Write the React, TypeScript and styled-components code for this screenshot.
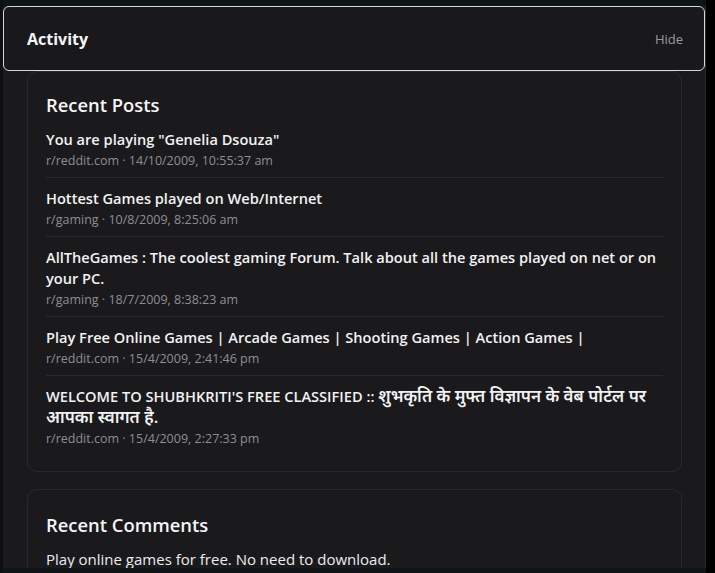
import React from "react";
import styled, { createGlobalStyle } from "styled-components";

const Global = createGlobalStyle`
  html, body { margin: 0; padding: 0; background: #0f1417; }
  body { font-family: "Open Sans", "Noto Sans", "Noto Sans Devanagari", "DejaVu Sans", sans-serif; color: #f2f2f2; }
  * { box-sizing: border-box; }
`;

const Page = styled.div`
  display: flex;
  height: 573px;
  overflow: hidden;
  background: #0f1417;
`;

const Gutter = styled.div`
  width: 3px;
  flex: none;
  background: #0d0f11;
`;

const Panel = styled.div`
  width: 703px;
  flex: none;
  margin-top: 6px;
  display: flex;
  flex-direction: column;
  background: #1a1a1c;
  border-right: 1px solid #2c2c2e;
  height: 562px;
  overflow: hidden;
`;

const Track = styled.div`
  flex: 1;
  background: #000;
`;

const Header = styled.div`
  height: 65px;
  flex: none;
  display: flex;
  align-items: center;
  justify-content: space-between;
  padding: 0 22px 0 23px;
  border: 1px solid #d6d6d6;
  border-radius: 6px;
  background: #19191b;
`;

const HeaderTitle = styled.h2`
  margin: 0;
  font-size: 16px;
  font-weight: 700;
  color: #f5f5f5;
`;

const HideButton = styled.span`
  font-size: 13px;
  color: #9b9b9f;
  margin-right: -1px;
`;

const Body = styled.div`
  display: flex;
  flex-direction: column;
  gap: 17px;
  padding: 0 23px 0 24px;
`;

const Card = styled.section<{ $top: number }>`
  border: 1px solid #29292c;
  border-radius: 10px;
  padding: ${(p) => p.$top}px 18px 16px 18px;
`;

const CardTitle = styled.h3`
  margin: 0;
  font-size: 18.4px;
  line-height: 26px;
  font-weight: 600;
  color: #f5f5f5;
`;

const List = styled.div`
  display: flex;
  flex-direction: column;
`;

const Item = styled.div`
  padding: 10px 0 6px;
  border-bottom: 1px solid #2a2a2d;
  &:first-child { padding-top: 11px; }
  &:last-child { border-bottom: none; }
`;

const PostTitle = styled.div`
  font-size: 14.6px;
  line-height: 21px;
  font-weight: 650;
  color: #f2f2f2;
`;

const Deva = styled.span`
  font-size: 17px;
  line-height: 14px;
`;

const Meta = styled.div`
  padding-top: 1px;
  font-size: 12.5px;
  line-height: 20px;
  color: #8e8e92;
`;

const Comment = styled.div`
  margin-top: 10px;
  font-size: 15px;
  line-height: 22px;
  color: #ececec;
`;

type Post = { title: React.ReactNode; meta: string };

const posts: Post[] = [
  { title: 'You are playing "Genelia Dsouza"', meta: "r/reddit.com · 14/10/2009, 10:55:37 am" },
  { title: "Hottest Games played on Web/Internet", meta: "r/gaming · 10/8/2009, 8:25:06 am" },
  { title: "AllTheGames : The coolest gaming Forum. Talk about all the games played on net or on your PC.", meta: "r/gaming · 18/7/2009, 8:38:23 am" },
  { title: "Play Free Online Games | Arcade Games | Shooting Games | Action Games |", meta: "r/reddit.com · 15/4/2009, 2:41:46 pm" },
  {
    title: (
      <>
        WELCOME TO SHUBHKRITI'S FREE CLASSIFIED :: <Deva>शुभकृति के मुफ्त विज्ञापन के वेब पोर्टल पर आपका स्वागत है.</Deva>
      </>
    ),
    meta: "r/reddit.com · 15/4/2009, 2:27:33 pm",
  },
];

export default function App() {
  return (
    <>
      <Global />
      <Page>
        <Gutter />
        <Panel>
          <Header>
            <HeaderTitle>Activity</HeaderTitle>
            <HideButton>Hide</HideButton>
          </Header>
          <Body>
            <Card $top={20}>
              <CardTitle>Recent Posts</CardTitle>
              <List>
                {posts.map((p) => (
                  <Item key={p.meta}>
                    <PostTitle>{p.title}</PostTitle>
                    <Meta>{p.meta}</Meta>
                  </Item>
                ))}
              </List>
            </Card>
            <Card $top={22}>
              <CardTitle>Recent Comments</CardTitle>
              <Comment>Play online games for free. No need to download.</Comment>
            </Card>
          </Body>
        </Panel>
        <Track />
      </Page>
    </>
  );
}
